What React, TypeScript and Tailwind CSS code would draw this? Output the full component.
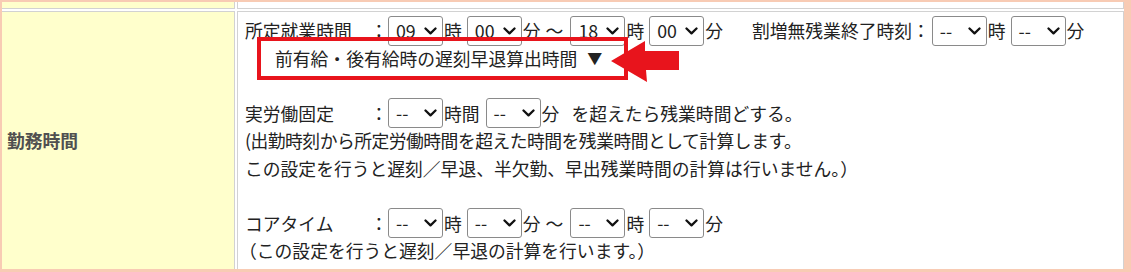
import React from "react";

function Sel({ v, cls = "" }: { v: string; cls?: string }) {
  return (
    <span
      className={
        "inline-flex h-[30px] w-[55px] shrink-0 items-center justify-between rounded-[3px] border border-[#8a8a8a] bg-white pl-[7px] pr-[5px] " +
        cls
      }
    >
      <span className="leading-none">{v}</span>
      <svg width="13" height="8" viewBox="0 0 13 8">
        <path d="M1.5 1.5 L6.5 6.3 L11.5 1.5" fill="none" stroke="#111" strokeWidth="2.3" strokeLinecap="round" strokeLinejoin="round" />
      </svg>
    </span>
  );
}

function Row({ children }: { children?: React.ReactNode }) {
  return <div className="flex h-[27.5px] items-center whitespace-nowrap">{children}</div>;
}

export default function App() {
  return (
    <div className="relative h-[272px] w-[1131px] bg-[#f8cbb4] pb-[3px] pl-[2px] pr-[7px] pt-[2px] font-['Noto_Sans_CJK_JP','Noto_Sans',sans-serif] text-[17.8px] text-[#222]">
      <div className="flex h-full flex-col bg-white">
        <div className="flex h-[7px] gap-[2px]">
          <div className="w-[233px] border-b border-r border-[#d2d2d2] bg-[#ffffcc]" />
          <div className="flex-1 border-b border-l border-r border-[#d2d2d2]" />
        </div>
        <div className="mt-[2px] flex flex-1 gap-[2px]">
          <div className="flex w-[233px] items-center border-r border-t border-[#d2d2d2] bg-[#ffffcc] pl-[5px] font-bold text-[#505050]">
            勤務時間
          </div>
          <div className="flex-1 border-l border-r border-t border-[#d2d2d2] pl-[7px] pt-[5px]">
            <Row>
              <span className="w-[125px]">所定就業時間</span>
              <span className="w-[18px]">：</span>
              <Sel v="09" />
              <span className="ml-[1px]">時</span>
              <Sel v="00" cls="ml-[5px]" />
              <span className="ml-[1px]">分</span>
              <span className="ml-[5px]">～</span>
              <Sel v="18" cls="ml-[7px]" />
              <span className="ml-[1px]">時</span>
              <Sel v="00" cls="ml-[5px]" />
              <span className="ml-[1px]">分</span>
              <span className="ml-[29px]">割増無残業終了時刻：</span>
              <Sel v="--" cls="ml-[2px]" />
              <span className="ml-[1px]">時</span>
              <Sel v="--" cls="ml-[5px]" />
              <span className="ml-[1px]">分</span>
            </Row>
            <Row>
              <span className="ml-[30px]">前有給・後有給時の遅刻早退算出時間</span>
              <span className="ml-[10px] text-[15px]">▼</span>
            </Row>
            <Row />
            <Row>
              <span className="w-[125px]">実労働固定</span>
              <span className="w-[18px]">：</span>
              <Sel v="--" />
              <span className="ml-[1px]">時間</span>
              <Sel v="--" cls="ml-[6px]" />
              <span className="ml-[1px]">分</span>
              <span className="ml-[12px]">を超えたら残業時間どする。</span>
            </Row>
            <Row>
              <span className="tracking-[-0.5px]">(出勤時刻から所定労働時間を超えた時間を残業時間として計算します。</span>
            </Row>
            <Row>
              <span>この設定を行うと遅刻／早退、半欠勤、早出残業時間の計算は行いません。）</span>
            </Row>
            <Row />
            <Row>
              <span className="w-[125px]">コアタイム</span>
              <span className="w-[18px]">：</span>
              <Sel v="--" />
              <span className="ml-[1px]">時</span>
              <Sel v="--" cls="ml-[5px]" />
              <span className="ml-[1px]">分</span>
              <span className="ml-[5px]">～</span>
              <Sel v="--" cls="ml-[7px]" />
              <span className="ml-[1px]">時</span>
              <Sel v="--" cls="ml-[5px]" />
              <span className="ml-[1px]">分</span>
            </Row>
            <Row>
              <span className="ml-[-6px]">（この設定を行うと遅刻／早退の計算を行います。）</span>
            </Row>
          </div>
        </div>
      </div>
      <div className="absolute left-[257px] top-[37px] h-[43px] w-[371px] border-[4px] border-[#e8141c]" />
      <svg className="absolute left-0 top-0" width="1131" height="272" viewBox="0 0 1131 272">
        <polygon points="611,61 645,41 645,51 679,51 679,70 646,70 647,82" fill="#e8141c" />
      </svg>
    </div>
  );
}
